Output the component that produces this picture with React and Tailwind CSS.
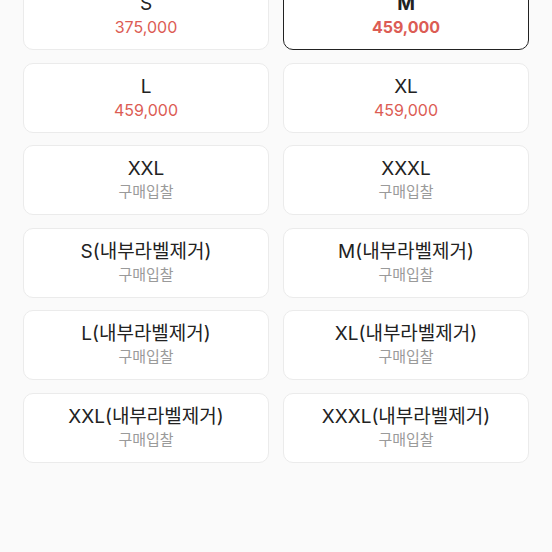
const sizes = [
  { name: 'S', price: '375,000' },
  { name: 'M', price: '459,000', selected: true },
  { name: 'L', price: '459,000' },
  { name: 'XL', price: '459,000' },
  { name: 'XXL' },
  { name: 'XXXL' },
  { name: 'S(내부라벨제거)' },
  { name: 'M(내부라벨제거)' },
  { name: 'L(내부라벨제거)' },
  { name: 'XL(내부라벨제거)' },
  { name: 'XXL(내부라벨제거)' },
  { name: 'XXXL(내부라벨제거)' },
];

function SizeCard({ item }) {
  const border = item.selected
    ? 'border-[1.5px] border-[#222222]'
    : 'border border-[#ebebeb]';
  return (
    <button
      className={`h-[70px] rounded-[10px] bg-white flex flex-col items-center justify-center ${border}`}
    >
      <span
        className={`text-[19px] leading-[24px] text-[#222222] ${item.selected ? 'font-bold' : ''}`}
      >
        {item.name}
      </span>
      {item.price ? (
        <span
          className={`text-[16px] leading-[22px] text-[#dc5c54] ${item.selected ? 'font-bold' : ''}`}
        >
          {item.price}
        </span>
      ) : (
        <span className="text-[15px] leading-[22px] text-[#9a9a9a]">구매입찰</span>
      )}
    </button>
  );
}

export default function App() {
  return (
    <div
      className="w-[552px] h-[552px] overflow-hidden bg-[#fafafa]"
      style={{ fontFamily: "Inter, 'Noto Sans CJK KR', sans-serif" }}
    >
      <div className="mt-[-20px] px-[23px] grid grid-cols-2 gap-x-[14px] gap-y-[12.5px]">
        {sizes.map((item) => (
          <SizeCard key={item.name} item={item} />
        ))}
      </div>
    </div>
  );
}
